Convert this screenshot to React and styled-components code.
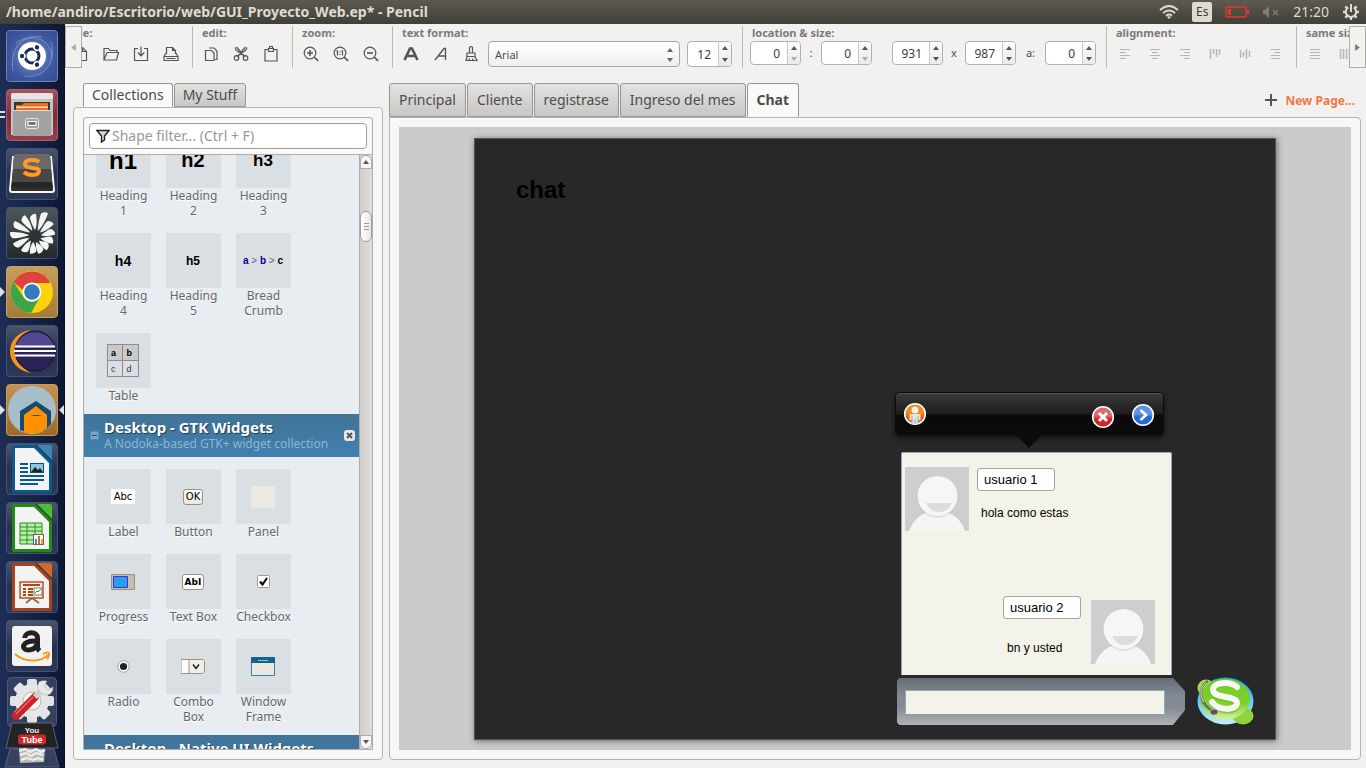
import React from "react";
import styled, { createGlobalStyle, css } from "styled-components";

const Global = createGlobalStyle`
  *, *::before, *::after { box-sizing: border-box; }
  body { margin: 0; background: #f2f1f0; }
  body, button, input, select { font-family: "Noto Sans", "Open Sans", sans-serif; }
  button { padding: 0; border: 0; background: none; color: inherit; }
  svg { display: block; }
  h1, h2, p { margin: 0; }
`;

const Desktop = styled.div`
  display: flex;
  flex-direction: column;
  height: 100vh;
  overflow: hidden;
  color: #4c4c4c;
`;

const TitleBar = styled.header`
  display: flex;
  align-items: center;
  justify-content: space-between;
  flex: none;
  height: 24px;
  padding: 0 6px;
  background: linear-gradient(#5c5a50, #403f39);
  color: #dfdbd2;
`;

const WindowTitle = styled.h1`
  font: bold 14px/24px "Noto Sans", "Open Sans", sans-serif;
  white-space: nowrap;
`;

const Tray = styled.div`
  display: flex;
  align-items: center;
  gap: 13px;
`;

const LangBadge = styled.button`
  width: 20px;
  height: 20px;
  border-radius: 2px;
  background: #dfdbd2;
  color: #3c3b37;
  font-size: 12px;
  line-height: 20px;
`;

const Clock = styled.time`
  font-size: 14px;
  line-height: 24px;
`;

const Workspace = styled.div`
  display: flex;
  flex: 1;
  min-height: 0;
`;

const Dock = styled.nav`
  display: flex;
  flex-direction: column;
  align-items: center;
  gap: 7px;
  flex: none;
  width: 65px;
  padding: 6px 0 0;
  overflow: hidden;
  border-right: 1px solid #0a1126;
  background: linear-gradient(90deg, #1d2e55, #131f40 70%, #0e1732);
`;

const DockButton = styled.button`
  position: relative;
  flex: none;
  width: 52px;
  height: 52px;
  border: 1px solid ${(p) => p.$edge || "#46526f"};
  border-radius: 4px;
  background: ${(p) => p.$bg || "linear-gradient(#4a556f, #25314f 50%, #2d3857)"};
  svg { width: 50px; height: 50px; }
  ${(p) => p.$running && css`
    &::before {
      content: "";
      position: absolute;
      left: -7px;
      top: 20px;
      border: 5px solid transparent;
      border-left-color: #dfdfdf;
      border-right-width: 0;
    }
  `}
  ${(p) => p.$focused && css`
    &::after {
      content: "";
      position: absolute;
      right: -7px;
      top: 20px;
      border: 5px solid transparent;
      border-right-color: #dfdfdf;
      border-left-width: 0;
    }
  `}
  ${(p) => p.$double && css`
    &::before {
      content: "";
      position: absolute;
      left: -7px;
      top: 21px;
      width: 5px;
      height: 7px;
      border: solid #dfdfdf;
      border-width: 2px 0;
    }
  `}
`;

const DockFold = styled.button`
  flex: none;
  width: 52px;
  height: 90px;
  svg { width: 52px; height: 90px; overflow: visible; }
`;

const AppWindow = styled.main`
  display: flex;
  flex-direction: column;
  flex: 1;
  min-width: 0;
`;

const Toolbar = styled.div`
  display: flex;
  flex: none;
  height: 59px;
  padding-top: 2px;
`;

const ScrollButton = styled.button`
  flex: none;
  display: flex;
  align-items: center;
  justify-content: center;
  width: 17px;
  height: 42px;
  border: 1px solid #b0aeab;
  background: #f2f1f0;
`;

const ToolStrip = styled.div`
  flex: 1;
  min-width: 0;
  overflow: hidden;
`;

const ToolGroups = styled.div`
  display: flex;
  width: max-content;
  margin-left: -20px;
`;

const Group = styled.section`
  flex: none;
  height: 42px;
  padding: 0 6px 0 3px;
  border-left: 1px solid #bcbab7;
`;

const GroupLabel = styled.h2`
  padding-left: 6px;
  color: #7b7b7b;
  font: bold 11px/14px "Noto Sans", sans-serif;
`;

const GroupRow = styled.div`
  display: flex;
  align-items: center;
  height: 28px;
`;

const ToolButton = styled.button`
  display: flex;
  align-items: center;
  justify-content: center;
  width: 30px;
  height: 28px;
  color: ${(p) => (p.$dim ? "#b4b7ba" : "#4b565f")};
`;

const FieldRow = styled.div`
  display: flex;
  align-items: flex-start;
  height: 26px;
  padding: 0 4px;
  gap: ${(p) => p.$gap || 0}px;
`;

const Selector = styled.div`
  position: relative;
  svg { position: absolute; right: 7px; top: 7px; pointer-events: none; }
  margin-left: -2px;
`;

const FontSelect = styled.select`
  appearance: none;
  display: block;
  width: 192px;
  height: 26px;
  padding: 0 6px;
  border: 1px solid #aaa7a3;
  border-radius: 4px;
  background: linear-gradient(#ffffff, #f0efee);
  color: #4c4c4c;
  font-size: 11px;
`;

const Spin = styled.div`
  display: flex;
  width: ${(p) => p.$width || 51}px;
  height: ${(p) => p.$height || 24}px;
  border: 1px solid #b3b0ac;
  border-radius: 4px;
  background: #fff;
  overflow: hidden;
`;

const SpinInput = styled.input`
  flex: 1;
  min-width: 0;
  padding: 0 7px 0 0;
  border: 0;
  background: transparent;
  color: #3c3c3c;
  font-size: 12px;
  text-align: right;
`;

const SpinButtons = styled.div`
  display: flex;
  flex-direction: column;
  width: 13px;
  border-left: 1px solid #c9c6c3;
  background: linear-gradient(#fcfcfc, #eceae9);
`;

const SpinButton = styled.button`
  display: flex;
  flex: 1;
  align-items: center;
  justify-content: center;
`;

const FieldText = styled.span`
  width: ${(p) => p.$width}px;
  font-size: 11px;
  line-height: 24px;
  text-align: center;
`;

const Panes = styled.div`
  display: flex;
  flex: 1;
  min-height: 0;
  padding: 0 5px 8px 8px;
  gap: 6px;
`;

const Sidebar = styled.aside`
  display: flex;
  flex-direction: column;
  flex: none;
  width: 310px;
`;

const Editor = styled.section`
  display: flex;
  flex-direction: column;
  flex: 1;
  min-width: 0;
`;

const TabBar = styled.div`
  display: flex;
  align-items: flex-end;
  flex: none;
  gap: 1px;
  padding-left: ${(p) => p.$indent || 0}px;
`;

const Tab = styled.button`
  height: ${(p) => (p.$tall ? 34 : 24)}px;
  padding: 0 ${(p) => (p.$tall ? 9 : 8)}px;
  border: 1px solid #999793;
  border-bottom-color: ${(p) => (p.$active ? "transparent" : "#999793")};
  border-radius: 3px 3px 0 0;
  background: ${(p) => (p.$active ? "#f9f9f9" : "linear-gradient(#e3e2e1, #c8c7c6)")};
  font-size: 14px;
  font-weight: ${(p) => (p.$active && p.$tall ? "bold" : "normal")};
  line-height: 20px;
  white-space: nowrap;
`;

const NewPage = styled.button`
  display: flex;
  align-items: center;
  gap: 8px;
  align-self: center;
  margin-left: auto;
  padding-right: 6px;
  color: #f37748;
  font-size: 12px;
  font-weight: bold;
  white-space: nowrap;
`;

const Panel = styled.div`
  display: flex;
  flex: 1;
  min-height: 0;
  padding: 9px;
  border: 1px solid #b6b3b0;
  border-radius: ${(p) => (p.$square ? "0 4px 4px 4px" : "4px")};
  background: #f7f7f7;
`;

const Library = styled.div`
  display: flex;
  flex-direction: column;
  flex: 1;
  min-width: 0;
  border: 1px solid #b0ada9;
  border-radius: 3px 3px 0 0;
  background: #f9f9f8;
`;

const FilterRow = styled.div`
  flex: none;
  padding: 5px;
  border-bottom: 1px solid #b0ada9;
`;

const FilterBox = styled.label`
  display: flex;
  align-items: center;
  gap: 2px;
  height: 26px;
  padding: 0 6px;
  border: 1px solid #a09e9b;
  border-radius: 4px;
  background: #fff;
`;

const FilterInput = styled.input`
  flex: 1;
  min-width: 0;
  padding: 0;
  border: 0;
  outline: 0;
  font-size: 14px;
  line-height: 20px;
  &::placeholder { color: #989898; opacity: 1; }
`;

const LibraryBody = styled.div`
  display: flex;
  flex: 1;
  min-height: 0;
`;

const ShapeList = styled.div`
  flex: 1;
  min-width: 0;
  overflow: hidden;
  background: #e8edf1;
`;

const ShapeScroll = styled.div`
  margin-top: -34px;
`;

const ShapeGrid = styled.div`
  display: grid;
  grid-template-columns: repeat(3, 55px);
  gap: 15px;
  padding: 12px 12px 11px;
`;

const Shape = styled.figure`
  margin: 0;
  figcaption {
    margin: 0 -4px;
    color: #666;
    font-size: 12px;
    line-height: 15px;
    text-align: center;
    text-shadow: 0 1px 0 #fff;
  }
`;

const Thumb = styled.div`
  display: flex;
  align-items: center;
  justify-content: center;
  height: 55px;
  padding: 0 1px 0 0;
  background: #dadfe3;
  color: #000;
  font-family: "Liberation Sans", Arial, sans-serif;
  font-weight: bold;
  font-size: ${(p) => p.$size || 12}px;
`;

const CollectionHeader = styled.div`
  display: flex;
  align-items: center;
  gap: 5px;
  height: 43px;
  padding: 0 4px 0 6px;
  background: linear-gradient(#417397, #4081b0);
`;

const CollectionText = styled.div`
  flex: 1;
  min-width: 0;
  padding-bottom: 3px;
  white-space: nowrap;
`;

const CollectionName = styled.h2`
  color: #fff;
  font: bold 15px/18px "Noto Sans", sans-serif;
  text-shadow: 1px 1px 1px #1d3c55;
`;

const CollectionNote = styled.p`
  color: #8fb6d2;
  font-size: 12px;
  line-height: 15px;
`;

const ScrollTrack = styled.div`
  display: flex;
  flex-direction: column;
  align-items: center;
  flex: none;
  width: 13px;
  border-left: 1px solid #b0ada9;
  background: linear-gradient(90deg, #cfccca, #e0dedc);
`;

const TrackEnd = styled.button`
  display: flex;
  align-items: center;
  justify-content: center;
  width: 12px;
  height: 14px;
  border: 1px solid #b0ada9;
  border-radius: ${(p) => (p.$top ? "6px 6px 0 0" : "0 0 6px 6px")};
  background: #f7f6f6;
`;

const TrackThumb = styled.div`
  display: flex;
  align-items: center;
  justify-content: center;
  width: 12px;
  height: 31px;
  margin: 42px 0 auto;
  border: 1px solid #a3a09c;
  border-radius: 6px;
  background: linear-gradient(90deg, #fff, #e9e8e7);
`;

const Canvas = styled.div`
  display: flex;
  justify-content: center;
  flex: 1;
  min-width: 0;
  padding: 11px 0 10px;
  overflow: hidden;
  background: #cbcbcb;
`;

const Page = styled.div`
  position: relative;
  flex: none;
  width: 802px;
  border: 1px solid #555;
  background: #282828;
  box-shadow: 1px 1px 6px #666;
  color: #000;
  font-family: "Liberation Sans", Arial, sans-serif;
`;

/* An object on the drawing page, placed at its document coordinates. */
const Placed = styled.div`
  position: absolute;
  left: ${(p) => p.$x}px;
  top: ${(p) => p.$y}px;
`;

const PageHeading = styled.h2`
  font-size: 24px;
  line-height: 28px;
`;

const Balloon = styled.div`
  position: relative;
  width: 269px;
  height: 43px;
  border: 1px solid #0a0a0a;
  border-radius: 5px;
  background: linear-gradient(#3a3a3a, #1c1c1c 52%, #0a0a0a 53%, #0c0c0c);
  box-shadow: inset 0 1px 0 #555, 0 3px 5px #111;
  &::after {
    content: "";
    position: absolute;
    left: 119px;
    top: 41px;
    border: 14px solid transparent;
    border-top-color: #0b0b0b;
    border-bottom-width: 0;
  }
`;

const ChatPane = styled.div`
  width: 271px;
  height: 223px;
  border: 1px solid #8fa8b8;
  border-bottom: 0;
  border-radius: 2px 2px 0 0;
  background: #f4f3ea;
`;

const UserInput = styled.input`
  display: block;
  width: 78px;
  height: 23px;
  padding: 0 6px;
  border: 1px solid #a7a29c;
  border-radius: 3px;
  background: #fff;
  color: #000;
  font: 13px "Liberation Sans", Arial, sans-serif;
`;

const Message = styled.p`
  font-size: 12px;
  line-height: 14px;
  white-space: nowrap;
`;

const SendBar = styled.div`
  width: 288px;
  height: 47px;
  padding: 12px 20px 0 8px;
  border-radius: 4px;
  background: linear-gradient(#666c76, #858b96 40%, #838a92 62%, #b0b3b8);
  clip-path: polygon(0 2px, 2px 0, 276px 0, 288px 13px, 288px 32px, 276px 47px, 2px 47px, 0 45px);
`;

const MessageInput = styled.input`
  display: block;
  width: 100%;
  height: 24px;
  padding: 0 6px;
  border: 1px solid #8fa8b8;
  border-bottom-color: #f4f3ea;
  border-radius: 0;
  background: #f4f3ea;
  font: 12px "Liberation Sans", Arial, sans-serif;
`;

const Ico = ({ size = 18, children, ...rest }) => (
  <svg width={size} height={size} viewBox="0 0 18 18" fill="none" stroke="currentColor" strokeWidth="1.2" aria-hidden="true" {...rest}>
    {children}
  </svg>
);

const Triangle = ({ dir = "down", color = "#555", size = 6 }) => {
  const d = { up: "M0 5 3 1 6 5z", down: "M0 1h6L3 5z", left: "M5 0v6L1 3z", right: "M1 0v6l4-3z" }[dir];
  return <svg width={size} height={size} viewBox="0 0 6 6" aria-hidden="true"><path d={d} fill={color} /></svg>;
};

const Lens = ({ children }) => (
  <Ico>
    <circle cx="8" cy="8" r="5.8" />
    <path d="m12.2 12.2 4 3.6" strokeWidth="1.6" />
    {children}
  </Ico>
);

const toolIcons = {
  New: <Ico><path d="M3.5 2.5h7l4 4v9h-11zM10.5 2.5v4h4" /></Ico>,
  Open: <Ico><path d="M2 15V3.500h4.500l1.500 2h7v2M2 15 5 7.500h11.500L14.500 15z" /></Ico>,
  Save: <Ico><path d="M6 3.500H2.500v12h13v-12H12M9 1.500v9M5.800 7.500 9 10.800l3.200-3.300" /></Ico>,
  Print: <Ico><path d="M4.500 9V2.500h6l3 3V9M10.500 2.500v3h3M4.500 7.500l-2.500 4v4h14v-4l-2.500-4M2 11.500h14M4.500 13.500h9" /></Ico>,
  Copy: <Ico><path d="M3.500 5.500h6l2.500 2.500v7.500H3.500zM7 3h5l3 3v8.500h-2" /></Ico>,
  Cut: <Ico><path d="M3 2.500c0 2 1.500 3 3 4l7 5M15 2.500c0 2-1.500 3-3 4l-7 5M4.500 2 13 12M13.500 2 5 12" /><circle cx="4.500" cy="13" r="2.300" /><circle cx="13.500" cy="13" r="2.300" /></Ico>,
  Paste: <Ico><path d="M6 4.500H3v11.500h12V4.500h-3M6.500 3.500h5v3h-5zM7.500 3.500V1.500h3v2" /></Ico>,
  "Zoom in": <Lens><path d="M5 8h6M8 5v6" strokeWidth="1.6" /></Lens>,
  "Actual size": <Lens><path d="M5.500 5.500v5M10.500 5.500v5M4.500 6.300l1-.8M9.500 6.300l1-.8M8 6.500v1M8 9v1" /></Lens>,
  "Zoom out": <Lens><path d="M5 8h6" strokeWidth="1.6" /></Lens>,
  Bold: <Ico><path d="M2.500 15 8 3.500h2L15.500 15M5 11h8" strokeWidth="2.600" /></Ico>,
  Italic: <Ico><path d="m3 15 9-11.500h1.500L13.500 15M6.500 11h7" strokeWidth="1.400" /></Ico>,
  "Format painter": <Ico><path d="M7.500 8V2.500c0-1.300 3-1.300 3 0V8M5 8h8v3.500H5zM5 11.500l-1 4h11l-2-4M7 15.500l.5-2M10.500 15.500l.5-2" /></Ico>,
};

const lines = (rows) => <Ico strokeWidth="1"><path d={rows.map(([a, b], i) => `M${a} ${4.5 + i * 3}H${b}`).join("")} /></Ico>;
const bars = (cols) => <Ico strokeWidth="1.500"><path d={cols.map(([a, b], i) => `M${4.5 + i * 3} ${a}V${b}`).join("")} /></Ico>;

const alignIcons = {
  "Align left": lines([[4, 14], [4, 10], [4, 14], [4, 10]]),
  "Align center": lines([[4, 14], [6, 12], [4, 14], [6, 12]]),
  "Align right": lines([[4, 14], [8, 14], [4, 14], [8, 14]]),
  "Align top": bars([[4, 14], [4, 9], [4, 12], [4, 10]]),
  "Align middle": bars([[5, 13], [7, 12], [4, 14], [6, 12]]),
  "Align bottom": lines([[5, 14], [8, 14], [5, 14], [5, 14]]),
};

const sizeIcons = {
  "Same width": lines([[4, 14], [4, 14], [4, 14], [4, 14]]),
  "Same height": bars([[4, 14], [4, 14], [4, 14], [4, 14]]),
};

const ToolSet = ({ label, icons, dim, children }) => (
  <Group>
    <GroupLabel>{label}</GroupLabel>
    <GroupRow>
      {Object.entries(icons).map(([name, icon]) => (
        <ToolButton key={name} $dim={dim} aria-label={name}>{icon}</ToolButton>
      ))}
      {children}
    </GroupRow>
  </Group>
);

const pick = (...names) => Object.fromEntries(names.map((n) => [n, toolIcons[n]]));

const SpinBox = ({ label, value, idle, ...size }) => (
  <Spin {...size}>
    <SpinInput aria-label={label} defaultValue={value} />
    <SpinButtons>
      <SpinButton aria-label={`Increase ${label}`}><Triangle dir="up" /></SpinButton>
      <SpinButton aria-label={`Decrease ${label}`}><Triangle color={idle ? "#aaa" : "#555"} /></SpinButton>
    </SpinButtons>
  </Spin>
);

const Sheet = ({ color, dark, children }) => (
  <svg viewBox="0 0 50 50" aria-hidden="true">
    <path d="M7 1h26l12 14v32q0 2-2 2H7q-2 0-2-2V3q0-2 2-2z" fill={dark} />
    <path d="M8 4h19l15 15v27H8z" fill="#f3f3f3" />
    <path d="M28 1h15q2 0 2 2v15z" fill="#2d3857" />
    <path d="M30 1h13q2 0 2 2v13z" fill={color} />
    {children}
  </svg>
);

/* Blade lengths, clockwise from the top. */
const blades = [21, 25, 21, 19, 18, 17, 17, 17, 19, 22, 24, 24, 22];

const dockItems = [
  { name: "Dash", edge: "#6d83bb", bg: "radial-gradient(circle, #7d96cc, #3d57a0 65%, #314c94)", art: (
    <svg viewBox="0 0 50 50" aria-hidden="true">
      <path d="M6 40C2 15 18 3 35 6M44 10c6 22-8 38-27 35M9 12C27 0 45 10 45 27" fill="none" stroke="#a5b7df" strokeWidth="1" opacity=".5" />
      <circle cx="25" cy="25" r="14" fill="#fff" />
      <circle cx="25" cy="25" r="7" fill="none" stroke="#1d2c5a" strokeWidth="3" />
      {[60, 180, 300].map((a) => <g key={a} transform={`rotate(${a} 25 25)`}><circle cx="34.500" cy="25" r="3.300" fill="#fff" /><circle cx="35" cy="25" r="2.200" fill="#1d2c5a" /></g>)}
    </svg>) },
  { name: "Files", double: true, edge: "#a5606b", bg: "linear-gradient(#a9505e, #7b2d3c 50%, #94404f)", art: (
    <svg viewBox="0 0 50 50" aria-hidden="true">
      <path d="M6 3h38q2 0 2 3v39H4V6q0-3 2-3z" fill="#c4c3c1" /><path d="M6 3h38q2 0 2 3v3H4V6q0-3 2-3z" fill="#e6e5e3" />
      <path d="M7 12h36v9H7z" fill="#3a3633" />
      <path d="M9 15h6l2-2h24v8H9z" fill="#e96d25" /><path d="M9 16.500h32v1.500H9z" fill="#ffe1bd" />
      <path d="M6 20h38v26H6z" fill="#a3a2a0" /><path d="M6 20.500h38" stroke="#dddcda" />
      <rect x="18.500" y="28.500" width="13" height="10" rx="2" fill="#a3a2a0" stroke="#e6e6e6" /><rect x="21" y="31.500" width="8" height="4" fill="#777" stroke="#fff" />
    </svg>) },
  { name: "Sublime Text", art: (
    <svg viewBox="0 0 50 50" aria-hidden="true">
      <path d="M6 8 3 41q0 2 2 2h40q2 0 2-2L44 8z" fill="#303030" stroke="#f4f4f4" strokeWidth="2" />
      <path d="M9 5h32q2 0 2 2l2 26H5L7 7q0-2 2-2z" fill="#484848" /><path d="M9 5h32q2 0 2 2l1 13H6L7 7q0-2 2-2z" fill="#6a6a6a" />
      <path d="M32 13c-3-3-14-3-14 2 0 6 14 2 14 7 0 5-11 5-15 1" fill="none" stroke="#ff9a28" strokeWidth="4" />
      <path d="M5 33h40l1 6H4z" fill="#262626" />
    </svg>) },
  { name: "Spiral viewer", bg: "linear-gradient(#4d565b, #232a2c)", art: (
    <svg viewBox="0 0 50 50" aria-hidden="true">
      {blades.map((l, i) => (
        <path key={i} transform={`rotate(${i * 27.7} 28 28)`} d={`M28 22C26 18 23 ${34 - l} 23 ${30 - l}q3-4 6-3C30 ${33 - l} 30 18 28 22z`} fill="#f4f4f4" />
      ))}
      <circle cx="28" cy="28" r="6" fill="#2b3335" />
    </svg>) },
  { name: "Chrome", running: true, edge: "#c3a266", bg: "linear-gradient(#c49f5d, #a47b36)", art: (
    <svg viewBox="0 0 50 50" aria-hidden="true">
      <circle cx="25" cy="25" r="21" fill="#fdd209" />
      <path d="M6.500 15A21 21 0 0 1 43.500 16H25a9.500 9.500 0 0 0-9 7z" fill="#e0433c" />
      <path d="M6.500 15A21 21 0 0 0 24 46l9-16a9.500 9.500 0 0 1-16.500 0z" fill="#3da549" />
      <circle cx="25" cy="25" r="9.500" fill="#fff" /><circle cx="25" cy="25" r="7.800" fill="#317bc0" />
    </svg>) },
  { name: "Eclipse", art: (
    <svg viewBox="0 0 50 50" aria-hidden="true">
      <path d="M24 4C-4 8-4 42 24 47 6 38 6 13 24 4z" fill="#f6931f" />
      <circle cx="28" cy="25" r="20" fill="#2b2256" stroke="#171336" /><path d="M9 20a20 20 0 0 1 38 0z" fill="#514891" />
      <path d="M8 20.500h40M7 25h42M8 29.500h40" stroke="#fff" strokeWidth="2" />
    </svg>) },
  { name: "Pencil", running: true, focused: true, edge: "#c79b5c", bg: "linear-gradient(#c49351, #9e6927)", art: (
    <svg viewBox="0 0 50 50" aria-hidden="true">
      <circle cx="25" cy="25" r="24" fill="#a7bdca" />
      <path d="M13 45V26l16-10 15 10v13a24 24 0 0 1-8 7V30l-7-5-8 5v18z" fill="#174a70" />
      <path d="M17 47V30l12-9 11 9v13a24 24 0 0 1-23 4z" fill="#ff9100" /><path d="M23 30h12q-6 2-12 0z" fill="#174a70" />
    </svg>) },
  { name: "Writer", art: (
    <Sheet color="#3a86b8" dark="#0b5a8e"><path d="M13 20h8M13 24h8M13 28h8M13 32h24M13 36h24M13 40h18" stroke="#0b5a8e" strokeWidth="2" /><rect x="23.500" y="19.500" width="13" height="9" fill="#8cc4e6" stroke="#0b4a75" /><path d="m24 28 4-5 3 3 2-2 3 4z" fill="#222" /></Sheet>) },
  { name: "Calc", art: (
    <Sheet color="#4fba35" dark="#208c12"><path d="M13 20h22v21H13z" fill="#b9efad" stroke="#268f1a" /><path d="M13 24h22M13 28h22M13 32h22M13 37h22M20 20v21M28 20v21" stroke="#268f1a" /><rect x="26.500" y="31.500" width="10" height="10" fill="#fff" stroke="#666" /><path d="M28 36h2v5h-2z" fill="#2899d5" /><path d="M31 33h2v8h-2z" fill="#e06326" /><path d="M34 36h2v5h-2z" fill="#e4ad24" /></Sheet>) },
  { name: "Impress", art: (
    <Sheet color="#d5672b" dark="#a8441a"><path d="M19 41l6-5 7 5" fill="none" stroke="#777" strokeWidth="2" /><rect x="13" y="20" width="23" height="16" fill="#fff3e8" stroke="#c25117" strokeWidth="1.500" /><path d="M16 23h17M16 27h3M16 30h3M16 33h3M21 27h5M21 30h5M21 33h5" stroke="#a9471a" strokeWidth="1.800" /><rect x="27" y="26" width="8" height="7" fill="#fff" stroke="#777" /><path d="m28 31 2-2 1 1 3-3" fill="none" stroke="#2c9b2c" /></Sheet>) },
  { name: "Amazon", art: (
    <svg viewBox="0 0 50 50" aria-hidden="true">
      <rect x="5" y="5" width="40" height="40" rx="3" fill="#f2f2f2" />
      <path d="M17.500 17c1-7 13-7 13 0v9q0 2 2 4M30 20c-16-1-16 9-9 9 5 0 8-3 9-6" fill="none" stroke="#222" strokeWidth="5" />
      <path d="M8 33c9 8 25 9 33 1M36 33q6-3 6 0 0 3-2 5" fill="none" stroke="#f79a1c" strokeWidth="2" />
    </svg>) },
];

const FoldArt = () => (
  <svg viewBox="0 0 52 90" aria-hidden="true">
    <rect x="1.500" y="-1.500" width="49" height="49" rx="4" fill="#334060" stroke="#4d5a78" />
    {[0, 45, 90, 135].map((a) => <rect key={a} x="21" y="0" width="10" height="44" rx="2" fill="#e3e3e3" transform={`rotate(${a} 26 22)`} />)}
    <circle cx="26" cy="22" r="17" fill="#e6e6e6" /><circle cx="26" cy="22" r="9" fill="#f4f4f4" stroke="#bbb" />
    <path d="M10 37 29 18" stroke="#c5242c" strokeWidth="8" strokeLinecap="round" /><path d="M10 35 27 18" stroke="#ef6b69" strokeWidth="1.500" />
    <path d="m29 18 7-7" stroke="#d0d0d0" strokeWidth="6" /><path d="M33 3q-3 5 0 9t9 4q5-2 5-8l-5 3-4-4 3-5q-5-1-8 1z" fill="#e9e9e9" stroke="#aaa" strokeWidth=".5" />
    <path d="M6 44h40l6 25H0z" fill="#232323" stroke="#5a6279" />
    <text x="26" y="54" textAnchor="middle" fontFamily="Liberation Sans, sans-serif" fontWeight="bold" fontSize="8" fill="#eee">You</text>
    <rect x="12" y="55.500" width="28" height="10" rx="3" fill="#cf2a27" />
    <text x="26" y="63.500" textAnchor="middle" fontFamily="Liberation Sans, sans-serif" fontWeight="bold" fontSize="9" fill="#fff">Tube</text>
    <path d="M4 70h44l5 18H-1z" fill="#35415e" stroke="#56617c" />
    <path d="m13 69 26 1-1 13-24 1z" fill="#bcbcb8" /><path d="m13 72 6-2 5 3 6-3 5 3 4-2M14 76l6-2 5 3 5-3 7 2M15 81l6-2 6 2 5-2 5 2" fill="none" stroke="#f1f1ee" strokeWidth="2" />
  </svg>
);

const Small = ({ w, h, children }) => <svg width={w} height={h} viewBox={`0 0 ${w} ${h}`} aria-hidden="true">{children}</svg>;

const Crumb = styled.span`
  color: #0000a0;
  font-size: 10px;
  white-space: pre;
  i { color: #666; font-style: normal; font-weight: normal; }
  b { color: #000; }
`;

const MiniTable = styled.table`
  border-collapse: collapse;
  width: 32px;
  height: 32px;
  font-size: 9px;
  line-height: 12px;
  th, td { width: 16px; height: 16px; padding: 0 0 0 3px; border: 1px solid #8a8d90; text-align: left; }
  th { background: #cacaca; }
  td { font-weight: normal; color: #333; }
`;

const MiniLabel = styled.span`
  padding: 1px 3px;
  background: #fff;
  font: 10px/13px "DejaVu Sans", sans-serif;
`;

const MiniBox = styled.span`
  padding: 0 2px;
  border: 1px solid #9a9284;
  border-radius: 3px;
  background: ${(p) => (p.$flat ? "#fff" : "linear-gradient(#fff, #eae7e0)")};
  font: ${(p) => (p.$flat ? "bold 9px" : "10px")}/14px "DejaVu Sans", sans-serif;
`;

const webShapes = [
  ["Heading 1", "h1", 24], ["Heading 2", "h2", 20], ["Heading 3", "h3", 17],
  ["Heading 4", "h4", 14], ["Heading 5", "h5", 12],
  ["Bread Crumb", <Crumb key="c">a <i>&gt;</i> b <i>&gt;</i> <b>c</b></Crumb>],
  ["Table", <MiniTable key="t"><tbody><tr><th>a</th><th>b</th></tr><tr><td>c</td><td>d</td></tr></tbody></MiniTable>],
];

const gtkShapes = [
  ["Label", <MiniLabel key="l">Abc</MiniLabel>],
  ["Button", <MiniBox key="b">OK</MiniBox>],
  ["Panel", <Small key="p" w={24} h={22}><path d="M0 0h24v22H0z" fill="#ece9e3" /></Small>],
  ["Progress", <Small key="g" w={24} h={16}><path d="M.5.5h23v15H.5z" fill="#c5beb0" stroke="#9a9284" /><path d="M2.500 2.500h14v11h-14z" fill="#2b9ded" stroke="#4030d0" /></Small>],
  ["Text Box", <MiniBox key="x" $flat>AbI</MiniBox>],
  ["Checkbox", <Small key="k" w={13} h={13}><rect x=".5" y=".5" width="12" height="12" rx="1" fill="#fff" stroke="#999" /><path d="m3 6.500 2.500 3L10 3" fill="none" stroke="#000" strokeWidth="2" /></Small>],
  ["Radio", <Small key="r" w={13} h={13}><circle cx="6.500" cy="6.500" r="5.700" fill="#fff" stroke="#999" /><circle cx="6.500" cy="6.500" r="3.600" fill="#222" /></Small>],
  ["Combo Box", <Small key="m" w={24} h={15}><path d="M0 .5h21q2.500 0 2.500 2.500v9q0 2.500-2.500 2.500H0z" fill="#fff" stroke="#9a9284" /><path d="M8 1h13q2 0 2 2v9q0 2-2 2H8z" fill="#f1eee8" /><path d="M8 1v13" stroke="#9a9284" /><path d="m12 5.500 3 4 3-4" fill="none" stroke="#222" strokeWidth="1.500" /></Small>],
  ["Window Frame", <Small key="w" w={24} h={19}><path d="M.5.5h23v18H.5z" fill="#ebe8e2" stroke="#2a85b5" /><path d="M0 0h24v6H0z" fill="#14628f" /><path d="M7 3.500h10" stroke="#cfe3ef" strokeDasharray="1.500 .6" /></Small>],
];

const Shapes = ({ items }) => (
  <ShapeGrid>
    {items.map(([name, art, size]) => (
      <Shape key={name}>
        <Thumb $size={size}>{art}</Thumb>
        <figcaption>{name.split(" ").length > 1 && name !== "Text Box" ? name.split(" ").map((w, i) => <React.Fragment key={w}>{i > 0 && <br />}{w}</React.Fragment>) : name}</figcaption>
      </Shape>
    ))}
  </ShapeGrid>
);

const Collection = ({ name, note }) => (
  <CollectionHeader>
    <button aria-label={`Collapse ${name}`}>
      <Small w={9} h={9}><path d="M.5.5h8v8h-8z" fill="#7aa7c8" stroke="#5589ae" /><path d="M2 4.500h5" stroke="#1f4c6e" /></Small>
    </button>
    <CollectionText>
      <CollectionName>{name}</CollectionName>
      <CollectionNote>{note}</CollectionNote>
    </CollectionText>
    <button aria-label={`Close ${name}`}>
      <Small w={11} h={11}><rect width="11" height="11" rx="3" fill="#e8e8e6" /><path d="m3 3 5 5M8 3l-5 5" stroke="#555" strokeWidth="2" /></Small>
    </button>
  </CollectionHeader>
);

const Avatar = () => (
  <Small w={64} h={64}>
    <path d="M0 0h64v64H0z" fill="#cecece" />
    <path d="M4 64C9 51 18 44 32 44s24 7 28 20z" fill="#f5f5f5" />
    <circle cx="32.500" cy="30" r="21" fill="#bdbdbd" opacity=".35" /><circle cx="32.500" cy="29" r="20" fill="#f6f6f6" />
    <path d="M21 36h26q-4 9-13 9t-13-9z" fill="#dcdcdc" />
  </Small>
);

const Disc = ({ id, top, bottom, children }) => (
  <Small w={24} h={24}>
    <defs><linearGradient id={id} x2="0" y2="1"><stop offset=".45" stopColor={top} /><stop offset=".6" stopColor={bottom} /></linearGradient></defs>
    <circle cx="12" cy="12" r="10.300" fill={`url(#${id})`} stroke="#fff" strokeWidth="1.600" />
    {children}
  </Small>
);

const Skype = () => (
  <Small w={57} h={48}>
    <defs>
      <linearGradient id="sky" x2="0" y2="1"><stop stopColor="#00a5e8" /><stop offset="1" stopColor="#c7effb" /></linearGradient>
      <linearGradient id="leaf" x2="0" y2="1"><stop stopColor="#75cc20" /><stop offset=".6" stopColor="#7fd02a" /><stop offset="1" stopColor="#d6f3a2" /></linearGradient>
    </defs>
    <ellipse cx="28.500" cy="24" rx="28" ry="23.500" fill="url(#sky)" />
    <circle cx="9" cy="11" r="8.500" fill="#9ade4e" /><ellipse cx="46" cy="39" rx="10.500" ry="8.500" fill="#8fd540" />
    <ellipse cx="28" cy="22" rx="25" ry="20.500" fill="url(#leaf)" />
    <path d="M40 11C33 3 15 7 15 14c0 9 25 5 25 14 0 8-18 7-25-1" fill="none" stroke="#5cab13" strokeWidth="6" opacity=".5" />
    <path d="M40 10C33 4 16 5 16 13c0 9 24 5 24 13 0 8-18 8-25-1" fill="none" stroke="#f8f8f8" strokeWidth="6" strokeLinecap="round" />
    <path d="M11 4C3 8 2 18 7 26q3 5 9 8" fill="none" stroke="#6d6d6d" strokeWidth="2.500" /><path d="M9 5C2 11 3 20 7 25" fill="none" stroke="#ddd" />
    <ellipse cx="17" cy="35" rx="4" ry="3" fill="#555" stroke="#ccc" strokeWidth=".7" />
  </Small>
);

export default function App() {
  return (
    <Desktop>
      <Global />
      <TitleBar>
        <WindowTitle>/home/andiro/Escritorio/web/GUI_Proyecto_Web.ep* - Pencil</WindowTitle>
        <Tray>
          <Small w={20} h={16}><path d="M1 6q9-8 18 0M4 9q6-5 12 0M7 11.800q3-2.500 6 0" fill="none" stroke="#dfdbd2" strokeWidth="1.800" /><path d="m8 13 2 2 2-2q-2-1.500-4 0z" fill="#dfdbd2" /></Small>
          <LangBadge>Es</LangBadge>
          <Small w={24} h={12}><path d="M1 1h20v10H1z" fill="none" stroke="#df382c" strokeWidth="1.400" /><path d="M3 3h3v6H3zM22 4h2v4h-2z" fill="#df382c" /></Small>
          <Small w={18} h={12}><path d="M1 4h2l4-4v12L3 8H1z" fill="#807e76" /><path d="m11 4 5 5M16 4l-5 5" stroke="#807e76" strokeWidth="1.500" /></Small>
          <Clock>21:20</Clock>
          <Small w={18} h={18}>
            {[45, 90, 135, 180, 225, 270, 315].map((a) => <path key={a} d="M9 1v3.500" stroke="#dfdbd2" strokeWidth="2.400" transform={`rotate(${a} 9 9)`} />)}
            <path d="M6 4.500a5.200 5.200 0 1 0 6 0M9 1v8" fill="none" stroke="#dfdbd2" strokeWidth="2" />
          </Small>
        </Tray>
      </TitleBar>
      <Workspace>
        <Dock aria-label="Launcher">
          {dockItems.map((d) => (
            <DockButton key={d.name} aria-label={d.name} $bg={d.bg} $edge={d.edge} $running={d.running} $focused={d.focused} $double={d.double}>{d.art}</DockButton>
          ))}
          <DockFold aria-label="More launchers"><FoldArt /></DockFold>
        </Dock>
        <AppWindow>
          <Toolbar>
            <ScrollButton aria-label="Scroll tools left"><Triangle dir="left" size={7} color="#aaa" /></ScrollButton>
            <ToolStrip>
              <ToolGroups>
                <ToolSet label="file:" icons={pick("New", "Open", "Save", "Print")} />
                <ToolSet label="edit:" icons={pick("Copy", "Cut", "Paste")} />
                <ToolSet label="zoom:" icons={pick("Zoom in", "Actual size", "Zoom out")} />
                <ToolSet label="text format:" icons={pick("Bold", "Italic", "Format painter")}>
                  <FieldRow $gap={7}>
                    <Selector>
                      <FontSelect aria-label="Font" defaultValue="Arial"><option>Arial</option></FontSelect>
                      <Small w={6} h={14}><path d="M0 4 3 0l3 4zM0 10h6l-3 4z" fill="#666" /></Small>
                    </Selector>
                    <SpinBox label="Font size" value="12" $width={45} $height={26} />
                  </FieldRow>
                </ToolSet>
                <ToolSet label="location & size:" icons={{}}>
                  <FieldRow>
                    <SpinBox label="X" value="0" idle />
                    <FieldText $width={20}>:</FieldText>
                    <SpinBox label="Y" value="0" idle />
                    <FieldText $width={20} />
                    <SpinBox label="Width" value="931" />
                    <FieldText $width={22}>x</FieldText>
                    <SpinBox label="Height" value="987" />
                    <FieldText $width={29}>a:</FieldText>
                    <SpinBox label="Angle" value="0" />
                  </FieldRow>
                </ToolSet>
                <ToolSet label="alignment:" icons={alignIcons} dim />
                <ToolSet label="same size:" icons={sizeIcons} dim />
              </ToolGroups>
            </ToolStrip>
            <ScrollButton aria-label="Scroll tools right"><Triangle dir="right" size={7} color="#777" /></ScrollButton>
          </Toolbar>
          <Panes>
            <Sidebar>
              <TabBar $indent={10}>
                <Tab $active>Collections</Tab>
                <Tab>My Stuff</Tab>
              </TabBar>
              <Panel>
                <Library>
                  <FilterRow>
                    <FilterBox>
                      <Small w={14} h={14}><path d="M1 1.500h12L8.500 7v4L5.500 13V7z" fill="#c9d9e8" stroke="#222" strokeWidth="1.400" /></Small>
                      <FilterInput aria-label="Shape filter" placeholder="Shape filter... (Ctrl + F)" />
                    </FilterBox>
                  </FilterRow>
                  <LibraryBody>
                    <ShapeList>
                      <ShapeScroll>
                        <Shapes items={webShapes} />
                        <Collection name="Desktop - GTK Widgets" note="A Nodoka-based GTK+ widget collection" />
                        <Shapes items={gtkShapes} />
                        <Collection name="Desktop - Native UI Widgets" note="Native widgets" />
                      </ShapeScroll>
                    </ShapeList>
                    <ScrollTrack>
                      <TrackEnd $top aria-label="Scroll up"><Triangle dir="up" /></TrackEnd>
                      <TrackThumb><Small w={5} h={9}><path d="M0 1.500h5M0 4.500h5M0 7.500h5" stroke="#999" /></Small></TrackThumb>
                      <TrackEnd aria-label="Scroll down"><Triangle /></TrackEnd>
                    </ScrollTrack>
                  </LibraryBody>
                </Library>
              </Panel>
            </Sidebar>
            <Editor>
              <TabBar>
                {["Principal", "Cliente", "registrase", "Ingreso del mes"].map((t) => <Tab key={t} $tall>{t}</Tab>)}
                <Tab $tall $active>Chat</Tab>
                <NewPage>
                  <Small w={12} h={12}><path d="M0 6h12M6 0v12" stroke="#4b565f" strokeWidth="2" /></Small>
                  New Page...
                </NewPage>
              </TabBar>
              <Panel $square>
                <Canvas>
                  <Page>
                    <Placed $x={41} $y={37}><PageHeading>chat</PageHeading></Placed>
                    <Placed $x={420} $y={253}><Balloon /></Placed>
                    <Placed $x={428} $y={263}><Disc id="person" top="#f08a1c" bottom="#ea5f0c"><circle cx="12" cy="8" r="3.500" fill="#f1f1f1" /><path d="M6.500 12h11v6h-2v4h-7v-4h-2z" fill="#e4e4e4" /><path d="M9 14v7M15 14v7M12 17v5" stroke="#999" strokeWidth=".8" /></Disc></Placed>
                    <Placed $x={616} $y={266}><Disc id="close" top="#dc6a6c" bottom="#cf2128"><path d="m8 8 8 8M16 8l-8 8" stroke="#fff" strokeWidth="3" /></Disc></Placed>
                    <Placed $x={656} $y={264}><Disc id="next" top="#5b95e4" bottom="#2369d8"><path d="m9.500 7 5.500 5-5.500 5" fill="none" stroke="#fff" strokeWidth="2.600" /></Disc></Placed>
                    <Placed $x={426} $y={313}><ChatPane /></Placed>
                    <Placed $x={430} $y={328}><Avatar /></Placed>
                    <Placed $x={502} $y={329}><UserInput aria-label="First user" defaultValue="usuario 1" /></Placed>
                    <Placed $x={506} $y={367}><Message>hola como estas</Message></Placed>
                    <Placed $x={528} $y={457}><UserInput aria-label="Second user" defaultValue="usuario 2" /></Placed>
                    <Placed $x={532} $y={502}><Message>bn y usted</Message></Placed>
                    <Placed $x={616} $y={461}><Avatar /></Placed>
                    <Placed $x={422} $y={539}><SendBar><MessageInput aria-label="Message" /></SendBar></Placed>
                    <Placed $x={722} $y={538}><Skype /></Placed>
                  </Page>
                </Canvas>
              </Panel>
            </Editor>
          </Panes>
        </AppWindow>
      </Workspace>
    </Desktop>
  );
}
